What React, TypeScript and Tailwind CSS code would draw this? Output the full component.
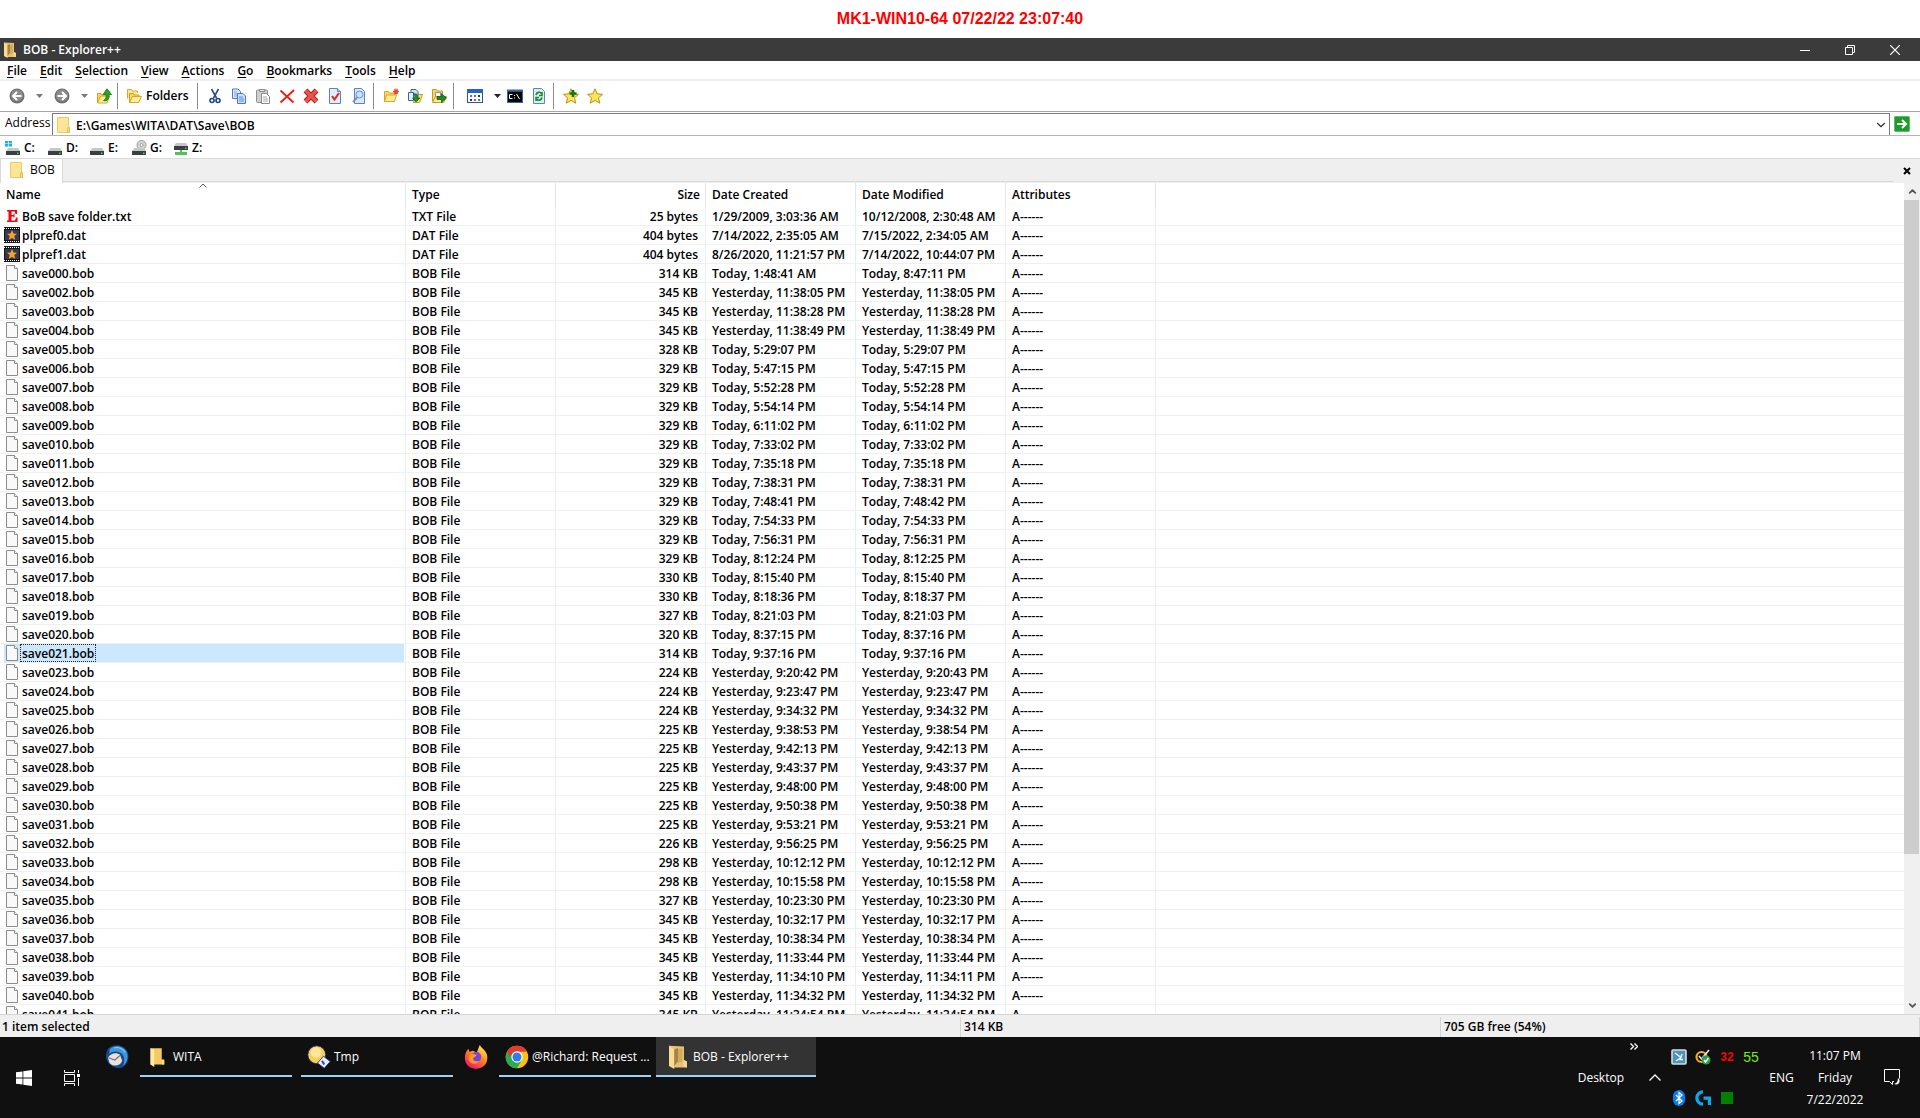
import type { ReactNode } from 'react';
import { clsx } from 'clsx';
import { ChevronDown, ChevronUp } from 'lucide-react';

interface FileRow {
  name: string;
  type: string;
  size: string;
  created: string;
  modified: string;
}

const bob = (num: string, size: string, created: string, modified: string = created): FileRow => ({
  name: `save${num}.bob`,
  type: 'BOB File',
  size: `${size} KB`,
  created,
  modified,
});

const FILES: FileRow[] = [
  { name: 'BoB save folder.txt', type: 'TXT File', size: '25 bytes', created: '1/29/2009, 3:03:36 AM', modified: '10/12/2008, 2:30:48 AM' },
  { name: 'plpref0.dat', type: 'DAT File', size: '404 bytes', created: '7/14/2022, 2:35:05 AM', modified: '7/15/2022, 2:34:05 AM' },
  { name: 'plpref1.dat', type: 'DAT File', size: '404 bytes', created: '8/26/2020, 11:21:57 PM', modified: '7/14/2022, 10:44:07 PM' },
  bob('000', '314', 'Today, 1:48:41 AM', 'Today, 8:47:11 PM'),
  bob('002', '345', 'Yesterday, 11:38:05 PM'),
  bob('003', '345', 'Yesterday, 11:38:28 PM'),
  bob('004', '345', 'Yesterday, 11:38:49 PM'),
  bob('005', '328', 'Today, 5:29:07 PM'),
  bob('006', '329', 'Today, 5:47:15 PM'),
  bob('007', '329', 'Today, 5:52:28 PM'),
  bob('008', '329', 'Today, 5:54:14 PM'),
  bob('009', '329', 'Today, 6:11:02 PM'),
  bob('010', '329', 'Today, 7:33:02 PM'),
  bob('011', '329', 'Today, 7:35:18 PM'),
  bob('012', '329', 'Today, 7:38:31 PM'),
  bob('013', '329', 'Today, 7:48:41 PM', 'Today, 7:48:42 PM'),
  bob('014', '329', 'Today, 7:54:33 PM'),
  bob('015', '329', 'Today, 7:56:31 PM'),
  bob('016', '329', 'Today, 8:12:24 PM', 'Today, 8:12:25 PM'),
  bob('017', '330', 'Today, 8:15:40 PM'),
  bob('018', '330', 'Today, 8:18:36 PM', 'Today, 8:18:37 PM'),
  bob('019', '327', 'Today, 8:21:03 PM'),
  bob('020', '320', 'Today, 8:37:15 PM', 'Today, 8:37:16 PM'),
  bob('021', '314', 'Today, 9:37:16 PM'),
  bob('023', '224', 'Yesterday, 9:20:42 PM', 'Yesterday, 9:20:43 PM'),
  bob('024', '224', 'Yesterday, 9:23:47 PM'),
  bob('025', '224', 'Yesterday, 9:34:32 PM'),
  bob('026', '225', 'Yesterday, 9:38:53 PM', 'Yesterday, 9:38:54 PM'),
  bob('027', '225', 'Yesterday, 9:42:13 PM'),
  bob('028', '225', 'Yesterday, 9:43:37 PM'),
  bob('029', '225', 'Yesterday, 9:48:00 PM'),
  bob('030', '225', 'Yesterday, 9:50:38 PM'),
  bob('031', '225', 'Yesterday, 9:53:21 PM'),
  bob('032', '226', 'Yesterday, 9:56:25 PM'),
  bob('033', '298', 'Yesterday, 10:12:12 PM'),
  bob('034', '298', 'Yesterday, 10:15:58 PM'),
  bob('035', '327', 'Yesterday, 10:23:30 PM'),
  bob('036', '345', 'Yesterday, 10:32:17 PM'),
  bob('037', '345', 'Yesterday, 10:38:34 PM'),
  bob('038', '345', 'Yesterday, 11:33:44 PM'),
  bob('039', '345', 'Yesterday, 11:34:10 PM', 'Yesterday, 11:34:11 PM'),
  bob('040', '345', 'Yesterday, 11:34:32 PM'),
  bob('041', '345', 'Yesterday, 11:34:54 PM'),
];

const SELECTED = 'save021.bob';
const MENUS = ['File', 'Edit', 'Selection', 'View', 'Actions', 'Go', 'Bookmarks', 'Tools', 'Help'];

/* ---------- icons ---------- */

interface SvgProps {
  size?: number;
  children: ReactNode;
}

function Svg({ size = 16, children }: SvgProps) {
  return (
    <svg width={size} height={size} viewBox="0 0 16 16" fill="none" className="shrink-0" aria-hidden="true">
      {children}
    </svg>
  );
}

const FolderIcon = ({ size = 16 }: { size?: number }) => (
  <Svg size={size}>
    <path d="M1.5.5h11v11l1 .5v3.500h-12z" fill="#ffe597" stroke="#eccb62" />
    <path d="M11.500 11l2-.5v5h-2z" fill="#ffe08a" stroke="#e6bd4b" />
  </Svg>
);

const OpenFolderIcon = ({ size = 16 }: { size?: number }) => (
  <Svg size={size}>
    <path d="M2 .5l10 .5v9l2 1v4H5z" fill="#e6c274" />
    <path d="M2 .5l3.500 2.500V16L2 14z" fill="#f8dc96" />
    <path d="M5.500 3l2.500-1v9l-2.500 3z" fill="#a9823c" />
    <path d="M8 3l3-1v9l-3 1z" fill="#d2ab5c" />
    <path d="M11.500 10l2.500 1v4l-2.500-.5z" fill="#f5d68c" />
  </Svg>
);

const TaskFolderIcon = () => (
  <Svg size={20}>
    <path d="M2 1h9v9l2 1v3H2z" fill="#f3cb62" />
    <path d="M2 1l3 1v14l-3-2z" fill="#ffe9a6" />
    <path d="M11 10h2v4h-2z" fill="#ffdb7d" />
  </Svg>
);

const RoundArrow = ({ flip }: { flip?: boolean }) => (
  <Svg>
    <circle cx="8" cy="8" r="7.500" fill="#6f6f6f" />
    <circle cx="8" cy="7.500" r="6" fill="#8c8c8c" />
    <path
      d={flip ? 'M3.500 8h8M8 4l4 4-4 4' : 'M12.500 8h-8M8 4L4 8l4 4'}
      stroke="#fff"
      strokeWidth="2"
    />
  </Svg>
);

const Caret = ({ className }: { className: string }) => (
  <svg width="7" height="4" viewBox="0 0 7 4" className={className} aria-hidden="true">
    <path d="M0 0h7L3.500 4z" fill="currentColor" />
  </svg>
);

const UpFolder = () => (
  <Svg>
    <path d="M1.500 14.500V5.500h3.500l1 1.500h5v7.500z" fill="#fbd55c" stroke="#d39c1c" />
    <path d="M1.500 15l3-7h9l-2.500 7z" fill="#ffea8f" stroke="#d8a72b" />
    <path d="M7.500 12.500c2.500-1 3-3.500 2.500-6H7L11 .8l4.500 5.700H13c.5 4-1.500 7-5.500 6z" fill="#2aa52c" stroke="#0d6d15" strokeWidth=".8" />
  </Svg>
);

const FoldersIcon = () => (
  <Svg>
    <path d="M1.500 10.500v-9h4l1 1.500h5v2" fill="#fde88e" stroke="#d9a52c" />
    <path d="M3.500 14.500v-9h4l1 1.500h4.500v2" fill="#fbd75f" stroke="#d39c1c" />
    <path d="M3.500 14.500l3-6h9l-3 6z" fill="#ffef9f" stroke="#d9a52c" />
  </Svg>
);

const CutIcon = () => (
  <Svg>
    <path d="M4.500 1l5 9M11.500 1l-5 9" stroke="#27508f" strokeWidth="1.600" />
    <circle cx="5" cy="12.500" r="2" stroke="#1a3f8c" strokeWidth="1.600" />
    <circle cx="11" cy="12.500" r="2" stroke="#1a3f8c" strokeWidth="1.600" />
  </Svg>
);

const CopyIcon = () => (
  <Svg>
    <path d="M1.500 1h5.500l2.500 2.500v7h-8z" fill="#dceaff" stroke="#4a78d0" />
    <path d="M3 4h3M3 6h4M3 8h4" stroke="#7da3e6" />
    <path d="M6.500 5.500H12l2.500 2.500v7.500h-8z" fill="#cfe0ff" stroke="#4a78d0" />
    <path d="M8 9h4M8 11h5M8 13h5" stroke="#5c8be0" />
  </Svg>
);

const PasteIcon = () => (
  <Svg>
    <rect x="1.500" y="2" width="11" height="12.500" rx="1" fill="#cfcfcf" stroke="#8f8f8f" />
    <path d="M4.500 3.500v-2h5v2z" fill="#e8e8e8" stroke="#8a8a8a" />
    <path d="M6.500 5.500h5l3 3v7h-8z" fill="#fff" stroke="#8a8a8a" />
    <path d="M8 9h4M8 11h5M8 13h5" stroke="#a8a8a8" />
  </Svg>
);

const DeleteIcon = () => (
  <Svg>
    <path d="M1.500 2.500l13 12M15 2L1.500 14.500" stroke="#ec1c10" strokeWidth="1.800" />
  </Svg>
);

const DeleteForeverIcon = () => (
  <Svg>
    <path d="M2.500 2.500l11 11M13.500 2.500l-11 11" stroke="#b3201c" strokeWidth="5.400" />
    <path d="M2.500 2.500l11 11M13.500 2.500l-11 11" stroke="#e8544c" strokeWidth="3.400" />
  </Svg>
);

const PropertiesIcon = () => (
  <Svg>
    <path d="M2.500.5h8l3 3v12h-11z" fill="#e3edff" stroke="#5a82cc" />
    <path d="M10.500.5v3h3" fill="#b9cff7" stroke="#5a82cc" />
    <path d="M5 8l2.500 3.500L12 5" stroke="#e02416" strokeWidth="2" />
  </Svg>
);

const SearchIcon = () => (
  <Svg>
    <path d="M3.500.5h7l3 3v12h-10z" fill="#dbe7fd" stroke="#5a82cc" />
    <circle cx="8.500" cy="6.500" r="3.500" fill="#c3e6fb" stroke="#6b8fc4" />
    <path d="M6 9.500L2 14" stroke="#7d8fae" strokeWidth="2" />
  </Svg>
);

const NewFolderIcon = () => (
  <Svg>
    <path d="M1.500 13.500v-10h4l1 1.500h5v8.500z" fill="#fbd75f" stroke="#d9a52c" />
    <path d="M1.500 13.500l2-6.500h10l-2 6.500z" fill="#ffec92" stroke="#d9a52c" />
    <path d="M13 .5v6M10 3.500h6M11 1.500l4 4M15 1.500l-4 4" stroke="#f0432c" strokeWidth="1.200" />
  </Svg>
);

const CopyToIcon = () => (
  <Svg>
    <path d="M6.500 14.500l2-8h7l-3 8z" fill="#ffe272" stroke="#c79a20" />
    <path d="M4 1.500h5l2 2v7H4z" fill="#cfe0ff" stroke="#3c62ad" />
    <path d="M1.500 4.500h5v8h-5z" fill="#e4eeff" stroke="#3c62ad" />
    <path d="M6 6c4-1 5 1 4.500 4H13l-4 4-3.500-4h2.200C8 8 8 7 6 6z" fill="#1f8f2a" stroke="#0c5c14" strokeWidth=".7" />
  </Svg>
);

const MoveToIcon = () => (
  <Svg>
    <path d="M1.500 1.500h4l1 1.500h5v10h-10z" fill="#fbd75f" stroke="#c79a20" />
    <path d="M4.500 4.500h5v5h-5z" fill="#fff" stroke="#7b92bd" />
    <path d="M1.500 14.500l3-6h11l-3 6z" fill="#ffe98a" stroke="#c79a20" />
    <path d="M6 8.500h4.500v-3L15.500 10l-5 4.500v-3H6z" fill="#1c8a28" stroke="#0a5712" strokeWidth=".7" />
  </Svg>
);

const ViewsIcon = () => (
  <Svg>
    <rect x=".5" y="1.500" width="15" height="13" fill="#fff" stroke="#2455b4" />
    <path d="M0 1h16v4H0z" fill="#2a63c8" />
    <path d="M3 7h2v2H3zM7 7h2v2H7z" fill="#5379c8" />
    <path d="M11 7h2v2h-2zM3 11h2v2H3z" fill="#223b86" />
    <path d="M7 11h2v2H7z" fill="#d9452c" />
    <path d="M11 11h2v2h-2z" fill="#3a9a4a" />
  </Svg>
);

const CommandIcon = () => (
  <Svg>
    <rect x=".5" y="2" width="15" height="12.500" fill="#050505" stroke="#3a64ae" />
    <path d="M1 3h14" stroke="#6d98de" />
    <path d="M5.500 6.500h-3v4h3M7.500 7v1M7.500 9.500v1M9.500 6l3 5" stroke="#fff" />
  </Svg>
);

const RefreshIcon = () => (
  <Svg>
    <path d="M2.500.5h8l3 3v12h-11z" fill="#e0ebff" stroke="#5a82cc" />
    <path d="M5 7c.5-3 4-3.500 5.500-1.500M11 4v3.500H8M11 9.500c-.5 3-4 3.500-5.500 1.500M5 13V9.500h3" stroke="#149122" strokeWidth="1.600" />
  </Svg>
);

const StarIcon = ({ add }: { add?: boolean }) => (
  <Svg>
    <path d="M8 .8l2.200 5 5.300.5-4 3.600 1.300 5.300L8 12.400l-4.800 2.800 1.300-5.300-4-3.600 5.300-.5z" fill="#ffe45a" stroke="#c08c16" />
    {add && <path d="M10 2v7M6.500 5.500h7" stroke="#17701d" strokeWidth="2.600" />}
  </Svg>
);

type DriveKind = 'system' | 'disk' | 'optical' | 'network';

const DriveIcon = ({ kind }: { kind: DriveKind }) => (
  <Svg>
    {kind === 'optical' && (
      <>
        <circle cx="10.500" cy="5" r="4.500" fill="#d6d6d6" stroke="#9b9b9b" />
        <circle cx="10.500" cy="5" r="1.500" fill="#fff" stroke="#9b9b9b" />
      </>
    )}
    {kind === 'network' ? (
      <>
        <path d="M3 3h10l2 3H1z" fill="#c4c7c9" />
        <path d="M1 6h14v4H1z" fill="#3b3f42" />
        <path d="M7 10h2v2h5v3H2v-3h5z" fill="#4fc35a" />
        <path d="M12 7.500h1.500V9H12z" fill="#35e04a" />
      </>
    ) : (
      <>
        <path d="M3.500 8h9.500l2 3H1z" fill="#c4c7c9" />
        <path d="M1 11h14v4H1z" fill="#3b3f42" />
        <path d="M12 12.500h1.500V14H12z" fill="#35e04a" />
      </>
    )}
    {kind === 'system' && <path d="M0 1h3v2.500H0zM3.600 1H7v2.500H3.600zM0 4h3v2.500H0zM3.600 4H7v2.500H3.600z" fill="#15b4f1" />}
  </Svg>
);

const GoIcon = () => (
  <Svg>
    <rect x=".5" y=".5" width="15" height="15" rx="1" fill="#1f9a2c" stroke="#5bbd62" />
    <path d="M3 8h9M8 4l4 4-4 4" stroke="#fff" strokeWidth="2" />
  </Svg>
);

const PageIcon = () => (
  <Svg>
    <path d="M2.500.5h8l3 3v12h-11z" fill="#f9f9f9" stroke="#8c8c8c" />
    <path d="M10.500.5v3h3" fill="#fff" stroke="#8c8c8c" />
  </Svg>
);

const EditorIcon = () => (
  <Svg>
    <path d="M3 2h10v4h-1.500L10.500 3.500H7.500V7h2V5.500h1v4h-1V8.500h-2v4h3.500l1-3H13.500v4.500H3v-1.500h1.500v-9H3z" fill="#f0050b" />
  </Svg>
);

const VideoIcon = () => (
  <Svg>
    <path d="M0 0h16v16H0z" fill="#15161c" />
    <path d="M1 3h14v10H1z" fill="#363a4b" />
    <path d="M0 1.500h16M0 14.500h16" stroke="#fff" strokeDasharray="1 1" />
    <path d="M8 3l1.500 3.500 3.500.3-2.700 2.300.9 3.700L8 11l-3.200 1.800.9-3.700L3 6.800l3.500-.3z" fill="#f5a233" />
  </Svg>
);

function fileIcon(name: string) {
  if (name.endsWith('.txt')) return <EditorIcon />;
  if (name.endsWith('.dat')) return <VideoIcon />;
  return <PageIcon />;
}

const WindowsIcon = () => (
  <Svg>
    <path d="M0 2.300l6.500-.9v6.200H0zM7.300 1.300L16 0v7.600H7.300zM0 8.400h6.500v6.200L0 13.700zM7.300 8.400H16V16l-8.700-1.300z" fill="#fff" />
  </Svg>
);

const TaskViewIcon = () => (
  <Svg>
    <path d="M.5 0v2.500h10V0M.5 16v-2.500h10V16M.5 4.500h10v7H.5zM14.500 0v3M14.500 8v8" stroke="#fff" />
    <path d="M13 4h3v3h-3z" fill="#fff" />
  </Svg>
);

const ThunderbirdIcon = () => (
  <Svg size={24}>
    <path d="M3 1.500C7-1 13 0 15 4.500c1.500 4 .5 8-3.500 10.500C7 16.500 2 13.500.8 9 .3 6 1 3.500 3 1.500z" fill="#16498c" />
    <path d="M3 3C6-.5 12.500.5 14.500 5c1.300 3.500 0 7-2.500 9 1.500-4 1-7.500-2-9C7.500 4 5 4 3 6z" fill="#3f97d8" />
    <path d="M6 2c3-1 6 .5 7.500 3" stroke="#8cc8f0" strokeWidth=".8" />
    <path d="M2 8.500c1.500-3 5.500-4 8-2l1.500 4C10 14.500 5 14.500 3 12z" fill="#e9e2d8" />
    <path d="M2.500 8.500l4 1.500 3.500-3" stroke="#77757c" strokeWidth=".8" />
  </Svg>
);

const TmpIcon = () => (
  <Svg size={24}>
    <circle cx="6.500" cy="6.500" r="6" fill="#f8cf55" stroke="#1c2068" strokeWidth=".6" />
    <circle cx="6" cy="5" r="3.500" fill="#ffe69a" />
    <path d="M11 7.500l4.500 3.500-4 4.500L7 12z" fill="#e9edfb" stroke="#222a80" strokeWidth=".6" />
    <path d="M10 10.500l1.500 2.500" stroke="#3241b8" strokeWidth="1.300" />
  </Svg>
);

const FirefoxIcon = () => (
  <Svg size={24}>
    <defs>
      <linearGradient id="fox" x1="13" y1="1" x2="4" y2="15" gradientUnits="userSpaceOnUse">
        <stop stopColor="#fff04a" />
        <stop offset=".45" stopColor="#ff8a1c" />
        <stop offset="1" stopColor="#f5156c" />
      </linearGradient>
    </defs>
    <path d="M.6 9C.5 6 1.500 4 3 2.500l.5 2L6 3.800 8.500 5 10.500 0c1 2 4 3.500 4.800 6.500C16.500 12 13 15.800 8 15.800S.8 12.500.6 9z" fill="url(#fox)" />
    <circle cx="8.200" cy="8" r="3.300" fill="#7a42dc" />
    <path d="M3.500 6.500c2-1 3.500 0 5 0-.5 1.500-2 1.500-2.500 2.500 0 1.500 2 2.500 4 1.500-1.500 3-6 2.500-7-1z" fill="#ff9a24" />
  </Svg>
);

const ChromeIcon = () => (
  <Svg size={24}>
    <circle cx="8" cy="8" r="7.500" fill="#fbc116" />
    <path d="M8 8L1.500 4.250A7.500 7.500 0 0 1 14.500 4.250H8z" fill="#e33b2e" />
    <path d="M1.500 4.250A7.500 7.500 0 0 0 8 15.500l3.250-5.600L8 8z" fill="#2da94f" />
    <path d="M1.500 4.250L4.750 9.900 8 8V4.250z" fill="#2da94f" />
    <path d="M1.500 4.250C4 0 12 0 14.500 4.250H8A3.750 3.750 0 0 0 4.600 6.500L3.500 7.600z" fill="#e33b2e" />
    <circle cx="8" cy="8" r="3.800" fill="#fff" />
    <circle cx="8" cy="8" r="3" fill="#2f7de9" />
  </Svg>
);

const NotificationIcon = () => (
  <svg width="17" height="17" viewBox="0 0 17 17" fill="none" aria-hidden="true">
    <path d="M10 12.500H8.500v3l-3-3h-5V.5h15v9" stroke="#fff" />
    <path d="M14 9c3.500 2.500 1 8-4 6 2.500-.5 4-2.500 4-6z" fill="#fff" />
  </svg>
);

/* ---------- window parts ---------- */

function ToolButton({ label, className = 'w-6', children }: { label: string; className?: string; children: ReactNode }) {
  return (
    <button type="button" aria-label={label} className={clsx('flex h-6 shrink-0 items-center justify-center', className)}>
      {children}
    </button>
  );
}

const Separator = () => <span className="mr-[5px] ml-[2px] h-[26px] w-px shrink-0 bg-[#8c8c8c]" />;

function TitleBar() {
  return (
    <header className="flex h-[23px] items-center bg-[#3b3b3b] pl-[2px] text-white">
      <OpenFolderIcon />
      <h1 className="ml-[5px] flex-1">BOB - Explorer++</h1>
      <button type="button" aria-label="Minimize" className="flex h-full w-[45px] items-center justify-center">
        <svg width="10" height="10" viewBox="0 0 10 10"><path d="M0 5.500h10" stroke="#fff" /></svg>
      </button>
      <button type="button" aria-label="Restore" className="flex h-full w-[45px] items-center justify-center">
        <svg width="10" height="10" viewBox="0 0 10 10" fill="none" stroke="#fff"><path d="M.5 2.500h7v7h-7zM2.500 2.500v-2h7v7h-2" /></svg>
      </button>
      <button type="button" aria-label="Close" className="mr-[2px] flex h-full w-[46px] items-center justify-center">
        <svg width="10" height="10" viewBox="0 0 10 10"><path d="M0 0l10 10M10 0L0 10" stroke="#fff" strokeWidth="1.200" /></svg>
      </button>
    </header>
  );
}

function MenuBar() {
  return (
    <nav className="flex h-5 items-center gap-[13px] border-b-2 border-[#f0f0f0] pt-[2px] pl-[7px]">
      {MENUS.map((menu) => (
        <button key={menu} type="button">
          <span className="underline underline-offset-2">{menu[0]}</span>
          {menu.slice(1)}
        </button>
      ))}
    </nav>
  );
}

function Toolbar() {
  return (
    <div role="toolbar" className="flex h-[31px] items-center border-b border-[#a5a5ab] pl-[5px]">
      <ToolButton label="Back"><RoundArrow /></ToolButton>
      <ToolButton label="Back history" className="w-5"><Caret className="text-[#7a7a7a]" /></ToolButton>
      <ToolButton label="Forward" className="w-[26px]"><RoundArrow flip /></ToolButton>
      <ToolButton label="Forward history" className="w-[18px]"><Caret className="text-[#7a7a7a]" /></ToolButton>
      <ToolButton label="Up" className="w-[22px]"><UpFolder /></ToolButton>
      <Separator />
      <button type="button" className="flex h-6 w-[72px] shrink-0 items-center gap-1 pl-[3px]">
        <FoldersIcon />
        Folders
      </button>
      <Separator />
      <ToolButton label="Cut"><CutIcon /></ToolButton>
      <ToolButton label="Copy"><CopyIcon /></ToolButton>
      <ToolButton label="Paste"><PasteIcon /></ToolButton>
      <ToolButton label="Delete"><DeleteIcon /></ToolButton>
      <ToolButton label="Delete permanently"><DeleteForeverIcon /></ToolButton>
      <ToolButton label="Properties"><PropertiesIcon /></ToolButton>
      <ToolButton label="Search"><SearchIcon /></ToolButton>
      <Separator />
      <ToolButton label="New folder"><NewFolderIcon /></ToolButton>
      <ToolButton label="Copy to"><CopyToIcon /></ToolButton>
      <ToolButton label="Move to"><MoveToIcon /></ToolButton>
      <Separator />
      <ToolButton label="Views" className="w-8"><ViewsIcon /></ToolButton>
      <ToolButton label="Choose view" className="w-3"><Caret className="text-[#222]" /></ToolButton>
      <ToolButton label="Command prompt"><CommandIcon /></ToolButton>
      <ToolButton label="Refresh"><RefreshIcon /></ToolButton>
      <Separator />
      <ToolButton label="Bookmark this folder"><StarIcon add /></ToolButton>
      <ToolButton label="Organize bookmarks"><StarIcon /></ToolButton>
    </div>
  );
}

function AddressBar() {
  return (
    <div className="flex h-6 items-end border-b border-[#b4b4b8]">
      <label htmlFor="address" className="w-[52px] shrink-0 pl-[5px] leading-6 font-normal">Address</label>
      <div className="flex h-[22px] flex-1 items-center border-x border-t border-[#7a7a80] pl-[3px]">
        <FolderIcon />
        <input id="address" type="text" defaultValue="E:\Games\WITA\DAT\Save\BOB" className="ml-1 flex-1 bg-transparent pt-[2px] outline-none" />
        <button type="button" aria-label="Address history" className="flex w-4 justify-center">
          <ChevronDown size={14} strokeWidth={2} color="#333" />
        </button>
      </div>
      <button type="button" aria-label="Go" className="mr-[10px] ml-1 self-center"><GoIcon /></button>
    </div>
  );
}

const DRIVES: { letter: string; kind: DriveKind }[] = [
  { letter: 'C:', kind: 'system' },
  { letter: 'D:', kind: 'disk' },
  { letter: 'E:', kind: 'disk' },
  { letter: 'G:', kind: 'optical' },
  { letter: 'Z:', kind: 'network' },
];

function DriveBar() {
  return (
    <div className="flex h-[23px] items-center border-b border-[#dadada] pt-px pl-[5px]">
      {DRIVES.map(({ letter, kind }) => (
        <button key={letter} type="button" className="flex w-[42px] items-center gap-[3px]">
          <DriveIcon kind={kind} />
          {letter}
        </button>
      ))}
    </div>
  );
}

function TabStrip() {
  return (
    <div role="tablist" className="flex h-6 bg-[#efefef]">
      <button type="button" role="tab" aria-selected="true" className="flex w-[63px] items-center gap-[5px] border-x border-[#d9d9d9] bg-white pb-[2px] pl-2 font-normal">
        <FolderIcon />
        BOB
      </button>
      <div className="mb-px flex-1 border-b border-[#d9d9d9]" />
      <button type="button" aria-label="Close tab" className="flex w-[27px] items-center justify-center">
        <svg width="8" height="8" viewBox="0 0 8 8"><path d="M1 1l6 6M7 1L1 7" stroke="#000" strokeWidth="2" /></svg>
      </button>
    </div>
  );
}

function FileList() {
  const th = 'relative h-6 border-r border-[#e5e5e5] pl-[6px] text-left font-semibold';
  const td = 'h-[19px] border-r border-b border-r-[#e8eef6] border-b-[#f0f0f0] pt-[2px] pl-[6px] leading-4';

  return (
    <div className="flex min-h-0 flex-1">
      <div className="min-w-0 flex-1 overflow-hidden">
        <table className="w-full table-fixed border-separate border-spacing-0 whitespace-nowrap">
          <colgroup>
            <col className="w-[406px]" />
            <col className="w-[150px]" />
            <col className="w-[150px]" />
            <col className="w-[150px]" />
            <col className="w-[150px]" />
            <col className="w-[150px]" />
            <col />
          </colgroup>
          <thead>
            <tr>
              <th className={th} aria-sort="ascending">
                Name
                <svg width="8" height="5" viewBox="0 0 8 5" fill="none" className="absolute top-0 left-1/2 -translate-x-1/2">
                  <path d="M.5 4.500L4 1l3.500 3.500" stroke="#555" />
                </svg>
              </th>
              <th className={th}>Type</th>
              <th className={clsx(th, 'pr-[5px] text-right')}>Size</th>
              <th className={th}>Date Created</th>
              <th className={th}>Date Modified</th>
              <th className={th}>Attributes</th>
              <td />
            </tr>
          </thead>
          <tbody>
            {FILES.map((file) => {
              const selected = file.name === SELECTED;
              return (
                <tr key={file.name}>
                  <td className="h-[19px] border-r border-b border-r-[#e8eef6] border-b-[#f0f0f0] pr-px pl-1">
                    <div className={clsx('flex h-[18px] items-center', selected && 'bg-[#cce8ff]')}>
                      {fileIcon(file.name)}
                      <span className={clsx('border px-px pt-[2px] leading-[14px]', selected ? 'border-dotted border-[#222]' : 'border-transparent')}>
                        {file.name}
                      </span>
                    </div>
                  </td>
                  <td className={td}>{file.type}</td>
                  <td className={clsx(td, 'pr-[7px] text-right')}>{file.size}</td>
                  <td className={td}>{file.created}</td>
                  <td className={td}>{file.modified}</td>
                  <td className={td}>A------</td>
                  <td className="border-b border-[#f0f0f0]" />
                </tr>
              );
            })}
          </tbody>
        </table>
      </div>
      <div className="flex w-4 flex-col bg-[#f0f0f0]">
        <button type="button" aria-label="Scroll up" className="flex h-[17px] items-center justify-center">
          <ChevronUp size={11} strokeWidth={4} color="#555" />
        </button>
        <div className="flex-1">
          <div className="mr-px h-[82%] bg-[#cdcdcd]" />
        </div>
        <button type="button" aria-label="Scroll down" className="flex h-[17px] items-center justify-center">
          <ChevronDown size={11} strokeWidth={4} color="#555" />
        </button>
      </div>
    </div>
  );
}

function StatusBar() {
  return (
    <footer className="grid h-[23px] grid-cols-[2fr_1fr_1fr] items-end border-t border-[#d5d5d5] bg-[#efefef] leading-5">
      <span className="pl-[2px]">1 item selected</span>
      <span className="border-l border-[#d5d5d5] pl-[3px]">314 KB</span>
      <span className="border-x border-[#d5d5d5] pl-[3px]">705 GB free (54%)</span>
    </footer>
  );
}

/* ---------- taskbar ---------- */

function TaskButton({ label, icon, className }: { label: string; icon: ReactNode; className?: string }) {
  return (
    <button type="button" className={clsx('flex h-10 shrink-0 items-center gap-[3px] border-b-2 border-[#9fd1f8] pt-px pl-[6px]', className)}>
      <span className="flex w-6 justify-center">{icon}</span>
      {label}
    </button>
  );
}

function Taskbar() {
  return (
    <div className="flex h-[81px] shrink-0 items-center bg-[#101010] font-normal whitespace-nowrap text-white">
      <button type="button" aria-label="Start" className="ml-4"><WindowsIcon /></button>
      <button type="button" aria-label="Task view" className="ml-8"><TaskViewIcon /></button>
      <div className="ml-[25px] flex h-10 items-center self-start">
        <button type="button" aria-label="Thunderbird"><ThunderbirdIcon /></button>
        <TaskButton label="WITA" icon={<TaskFolderIcon />} className="ml-[11px] w-[152px]" />
        <TaskButton label="Tmp" icon={<TmpIcon />} className="ml-[9px] w-[152px]" />
        <button type="button" aria-label="Firefox" className="ml-[11px]"><FirefoxIcon /></button>
        <TaskButton label="@Richard: Request ..." icon={<ChromeIcon />} className="ml-[11px] w-[152px]" />
        <TaskButton label="BOB - Explorer++" icon={<OpenFolderIcon size={24} />} className="ml-[5px] w-40 bg-[#333] pl-[10px]" />
      </div>
      <div className="ml-auto flex h-full items-center">
        <span className="mr-[6px]">Desktop</span>
        <button type="button" aria-label="More toolbars" className="mt-[6px] self-start">
          <svg width="8" height="7" viewBox="0 0 8 7" fill="none" stroke="#fff" strokeWidth="1.400"><path d="M.5.500l3 3-3 3M4.500.500l3 3-3 3" /></svg>
        </button>
        <button type="button" aria-label="Show hidden icons" className="ml-[11px]">
          <svg width="12" height="7" viewBox="0 0 12 7" fill="none" stroke="#fff" strokeWidth="1.300"><path d="M.5 6.500L6 1l5.500 5.500" /></svg>
        </button>
        <div className="ml-[6px] grid h-full grid-cols-4 grid-rows-2 place-items-center">
          <span className="flex w-6 justify-center">
            <Svg>
              <rect x="1" y="1" width="14" height="14" rx="1" fill="#4f94b8" stroke="#d5dde0" strokeWidth="1.600" />
              <path d="M4 4l6 4.500L5 12M11 5l-2 5.500h3" stroke="#e9f4f8" strokeWidth="1.400" />
            </Svg>
          </span>
          <span className="flex w-6 justify-center">
            <Svg>
              <circle cx="6.500" cy="8" r="5" stroke="#f2b01e" strokeWidth="2.200" />
              <path d="M4 7l2.500 3L14 1" stroke="#e8e8e8" strokeWidth="1.600" />
              <circle cx="11" cy="11" r="4.500" fill="#2f9e44" />
              <path d="M9 11l1.500 2 3-4" stroke="#fff" strokeWidth="1.400" />
            </Svg>
          </span>
          <span className="w-6 text-center font-['Liberation_Sans',sans-serif] font-bold text-[#f00505]">32</span>
          <span className="w-6 text-center font-['Liberation_Sans',sans-serif] text-sm text-[#7be80f]">55</span>
          <Svg>
            <rect x="2" width="12" height="16" rx="6" fill="#0a7cf0" />
            <path d="M5 5l6 6-3 2.500v-11L11 5l-6 6" stroke="#fff" strokeWidth="1.200" />
          </Svg>
          <Svg>
            <path d="M8 .2V3.500a4.500 4.500 0 1 0 0 9v3.300A7.700 7.700 0 0 1 8 .2zM8.500 6.500H16V15h-3.200V9.700H8.500z" fill="#0fa7e8" />
          </Svg>
          <Svg>
            <path d="M2 2h12v12H2z" fill="#018001" />
          </Svg>
        </div>
        <span className="ml-1 w-[29px] text-center">ENG</span>
        <div className="w-[78px] text-center leading-[22px]">
          <div>11:07 PM</div>
          <div>Friday</div>
          <div>7/22/2022</div>
        </div>
        <button type="button" aria-label="Notifications" className="mr-[19px] ml-[10px]"><NotificationIcon /></button>
      </div>
    </div>
  );
}

export default function App() {
  return (
    <div className="flex h-screen flex-col overflow-hidden bg-white font-['Open_Sans','Noto_Sans',sans-serif] text-xs font-semibold text-black">
      <p className="h-[38px] shrink-0 text-center font-['Liberation_Sans',Arial,sans-serif] text-base leading-[37px] font-bold text-[#f00]">
        MK1-WIN10-64 07/22/22 23:07:40
      </p>
      <TitleBar />
      <MenuBar />
      <Toolbar />
      <AddressBar />
      <DriveBar />
      <TabStrip />
      <FileList />
      <StatusBar />
      <Taskbar />
    </div>
  );
}
